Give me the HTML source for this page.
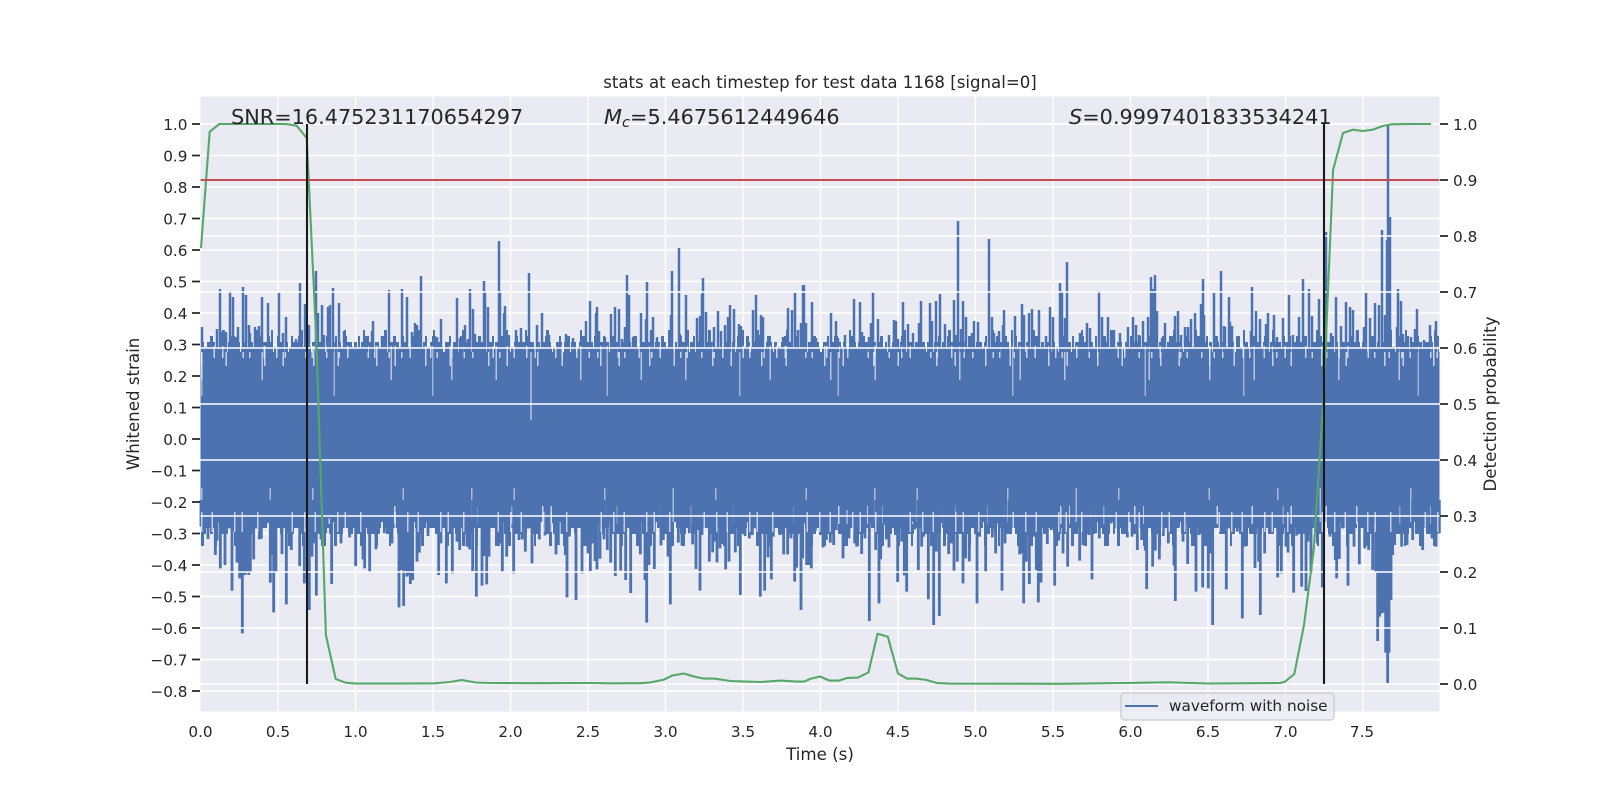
<!DOCTYPE html>
<html><head><meta charset="utf-8"><style>html,body{margin:0;padding:0;background:#fff;width:1600px;height:800px;overflow:hidden}svg{display:block}text{font-family:"DejaVu Sans","Liberation Sans",sans-serif;fill:#262626}</style></head><body>
<svg width="1600" height="800" viewBox="0 0 1600 800" xmlns="http://www.w3.org/2000/svg">
<rect x="200.5" y="96.5" width="1239" height="615" fill="#EAEAF2"/>
<path fill="none" stroke="#fff" stroke-width="1.4" d="M278 96.5V711.5M355.5 96.5V711.5M433 96.5V711.5M510.5 96.5V711.5M588 96.5V711.5M665.5 96.5V711.5M743 96.5V711.5M820.5 96.5V711.5M898 96.5V711.5M975.5 96.5V711.5M1053 96.5V711.5M1130.5 96.5V711.5M1208 96.5V711.5M1285.5 96.5V711.5M1363 96.5V711.5M200.5 124H1439.5M200.5 155.5H1439.5M200.5 187H1439.5M200.5 218.5H1439.5M200.5 250H1439.5M200.5 281.5H1439.5M200.5 313H1439.5M200.5 344.5H1439.5M200.5 376H1439.5M200.5 407.5H1439.5M200.5 439H1439.5M200.5 470.5H1439.5M200.5 502H1439.5M200.5 533.5H1439.5M200.5 565H1439.5M200.5 596.5H1439.5M200.5 628H1439.5M200.5 659.5H1439.5M200.5 691H1439.5"/>

<!-- waveform body -->
<rect x="200.5" y="352" width="1239" height="170" fill="#4C72B0"/>
<g fill="none" stroke="#4C72B0">
<path d="M201 341H1439" stroke-width="22" stroke-dasharray="2 19 3 31 2 13 2 27 3 41 2 17"/>
<path d="M201 344H1439" stroke-width="16" stroke-dasharray="2 7 3 11 2 5 4 13 2 9 3 6"/>
<path d="M201 347H1439" stroke-width="10" stroke-dasharray="3 3 4 2 2 5 6 2 3 4 5 3"/>
<path d="M201 349.5H1439" stroke-width="5" stroke-dasharray="6 1 4 2 8 1 3 2 5 1"/>
<path d="M201 525H1439" stroke-width="6" stroke-dasharray="9 2 5 3 14 1 7 2 11 3"/>
<path d="M201 528H1439" stroke-width="12" stroke-dasharray="5 4 3 7 8 3 2 6 6 5"/>
<path d="M201 534H1439" stroke-width="24" stroke-dasharray="3 11 2 17 5 8 3 23 2 13"/>
</g>
<g fill="none" stroke="#EAEAF2">
<path d="M201 352H1439" stroke-opacity=".8" stroke-width="12" stroke-dasharray="1.5 11 1.5 7 1.5 19 1.5 5 1.5 13"/>
<path d="M201 356H1439" stroke-opacity=".8" stroke-width="20" stroke-dasharray="1.5 23 1.5 37 1.5 17 1.5 29"/>
<path d="M201 363H1439" stroke-opacity=".7" stroke-width="34" stroke-dasharray="1.5 59 1.5 43 1.5 83"/>
<path d="M201 371H1439" stroke-opacity=".55" stroke-width="50" stroke-dasharray="1.5 131 1.5 97 1.5 173"/>
<path d="M531 352V420" stroke-opacity=".7" stroke-width="1.5"/>
<path d="M201 515H1439" stroke-opacity=".8" stroke-width="18" stroke-dasharray="1.5 13 1.5 29 1.5 7 1.5 19"/>
<path d="M201 505H1439" stroke-opacity=".6" stroke-width="34" stroke-dasharray="1.5 67 1.5 41 1.5 89"/>
</g>

<!-- upper spikes -->
<path fill="none" stroke="#4C72B0" stroke-width="2.5" d="M202 352V327M220 352V289M217 352V329M221 352V332M226 352V332M230 352V291M233 352V297M236 352V337M238 352V327M243 352V287M246 352V295M249 352V325M250 352V333M255 352V327M259 352V326M262 352V297M268 352V303M279 352V293M283 352V333M286 352V317M296 352V339M300 352V283M305 352V304M309 352V325M316 352V271M318 352V313M322 352V305M324 352V335M328 352V307M330 352V305M333 352V288M339 352V303M344 352V331M367 352V336M372 352V331M373 352V321M382 352V336M389 352V290M402 352V289M407 352V297M412 352V332M415 352V323M417 352V325M421 352V276M437 352V337M441 352V319M457 352V298M460 352V338M465 352V325M468 352V339M470 352V289M473 352V309M475 352V334M484 352V281M485 352V292M488 352V307M499 352V241
M500 352V291M504 352V313M505 352V306M509 352V335M516 352V330M521 352V328M529 352V273M537 352V325M542 352V313M549 352V335M566 352V334M573 352V338M583 352V336M586 352V321M590 352V301M596 352V313M597 352V307M599 352V331M605 352V337M611 352V314M615 352V307M619 352V309M622 352V339M625 352V327M627 352V275M629 352V295M633 352V337M641 352V313M646 352V319M647 352V282M651 352V330M653 352V317M657 352V337M671 352V315M672 352V271M679 352V248M680 352V334M686 352V295M697 352V318M700 352V316M702 352V294M703 352V278M706 352V312M714 352V327M718 352V311M721 352V331M725 352V325M728 352V317M730 352V305M734 352V309M739 352V324M741 352V326M753 352V310M756 352V295M759 352V335M761 352V315M763 352V317M783 352V337M788 352V308M792 352V310M795 352V293M798 352V330M801 352V323M803 352V285
M804 352V285M806 352V323M812 352V302M816 352V338M831 352V313M836 352V321M838 352V338M845 352V335M854 352V299M860 352V302M862 352V332M869 352V337M871 352V323M873 352V292M878 352V319M889 352V335M894 352V320M896 352V321M898 352V339M903 352V302M908 352V324M913 352V333M919 352V323M921 352V301M930 352V303M932 352V321M936 352V301M940 352V294M945 352V324M954 352V300M956 352V335M958 352V221M961 352V329M963 352V301M966 352V317M972 352V333M974 352V321M978 352V322M989 352V239M992 352V317M994 352V333M999 352V331M1003 352V325M1004 352V310M1015 352V316M1022 352V304M1024 352V315M1029 352V313M1032 352V309M1039 352V310M1046 352V336M1050 352V307M1053 352V317M1060 352V283M1062 352V291M1065 352V318M1067 352V262M1080 352V333M1087 352V323M1090 352V328M1099 352V291M1102 352V317
M1108 352V317M1114 352V330M1120 352V333M1128 352V327M1133 352V317M1136 352V325M1139 352V335M1143 352V321M1148 352V317M1151 352V277M1153 352V289M1155 352V275M1157 352V311M1162 352V338M1165 352V323M1175 352V316M1178 352V311M1181 352V335M1185 352V327M1188 352V327M1191 352V319M1195 352V313M1201 352V304M1203 352V279M1204 352V315M1214 352V293M1221 352V271M1224 352V326M1225 352V327M1229 352V297M1230 352V322M1232 352V326M1251 352V331M1252 352V287M1256 352V311M1260 352V319M1266 352V324M1268 352V313M1274 352V315M1277 352V337M1283 352V318M1289 352V295M1290 352V336M1293 352V335M1299 352V317M1303 352V279M1309 352V289M1312 352V316M1319 352V299M1326 352V232M1331 352V333M1336 352V297M1341 352V326M1346 352V302M1350 352V307M1353 352V310M1357 352V332M1364 352V327M1366 352V293M1370 352V318M1375 352V303M1379 352V305M1382 352V230M1385 352V315M1387 352V240M1388 352V124M1390 352V217M1397 352V327M1398 352V289M1401 352V301M1403 352V334M1411 352V337M1415 352V329M1417 352V309M1424 352V340M1430 352V325M1436 352V321"/>

<!-- lower spikes (crop coordinates, 3x) -->
<g fill="none" stroke="#4C72B0" stroke-width="8.5">
<path transform="translate(197,500) scale(.33333)" d="M12 0V80M20 0V90M33 0V117M45 0V80M55 0V165M60 0V122M70 0V205M84 0V195M96 0V85M105 0V272M112 0V95M120 0V188M128 0V235M134 0V235M136 0V400M144 0V225M150 0V215M155 0V225M160 0V215M170 0V178M178 0V85M187 0V118M193 0V116M200 0V75M210 0V70M220 0V248M226 0V165M230 0V337M237 0V218M247 0V60M255 0V162M268 0V313M275 0V100M283 0V150M292 0V80M298 0V80M308 0V198M322 0V250M337 0V330M345 0V170M352 0V130M358 0V287M365 0V100M372 0V118M386 0V100M395 0V55M404 0V252M415 0V100M424 0V85M432 0V130M445 0V55M458 0V112M470 0V60M476 0V198M487 0V40M498 0V178M503 0V205M518 0V215M527 0V40M537 0V148M548 0V60M562 0V100M570 0V75M585 0V130M606 0V322M612 0V210M620 0V318M626 0V212M630 0V230M636 0V225M640 0V252M647 0V240M660 0V185M667 0V158M682 0V80M693 0V108M702 0V55M725 0V225M732 0V130M748 0V250M766 0V220M780 0V125M788 0V150M800 0V115M810 0V140M818 0V148M827 0V213M838 0V290M855 0V257M862 0V168M869 0V253M876 0V170M886 0V70M903 0V135M908 0V130"/>
<path transform="translate(500,500) scale(.33333)" d="M7 0V214M20 0V170M30 0V70M41 0V220M57 0V120M67 0V118M76 0V155M85 0V85M96 0V190M108 0V102M118 0V118M135 0V106M145 0V60M160 0V70M168 0V163M175 0V135M186 0V102M196 0V165M201 0V292M208 0V110M216 0V82M228 0V300M246 0V220M253 0V70M258 0V90M264 0V160M271 0V213M279 0V130M285 0V183M291 0V208M300 0V176M312 0V118M322 0V150M332 0V188M346 0V228M356 0V85M362 0V212M377 0V240M386 0V80M392 0V279M402 0V60M412 0V90M421 0V163M435 0V240M440 0V368M447 0V195M463 0V207M470 0V45M483 0V136M490 0V120M504 0V170M511 0V313M535 0V128M546 0V137M558 0V70M568 0V100M578 0V133M588 0V207M593 0V90M600 0V272M606 0V105M615 0V55M628 0V185M638 0V157M644 0V125M651 0V187M660 0V145M668 0V132M677 0V208M687 0V185M697 0V90M706 0V157M715 0V70M721 0V285M735 0V108M748 0V115M757 0V105M768 0V85M781 0V290M794 0V272M804 0V172M814 0V238M820 0V110M830 0V60M840 0V105M851 0V163M863 0V163M873 0V115M884 0V245M890 0V203M903 0V330M908 0V175"/>
<path transform="translate(803,500) scale(.33333)" d="M2 0V70M11 0V195M18 0V195M25 0V205M37 0V92M52 0V105M60 0V142M70 0V120M82 0V128M92 0V135M100 0V90M120 0V175M130 0V30M138 0V115M155 0V130M161 0V140M176 0V162M186 0V115M199 0V363M208 0V75M218 0V150M228 0V310M233 0V178M243 0V75M250 0V118M258 0V142M270 0V60M277 0V105M284 0V246M296 0V125M304 0V226M311 0V275M328 0V65M335 0V88M346 0V210M356 0V140M362 0V110M376 0V298M384 0V72M392 0V375M400 0V155M409 0V348M414 0V70M437 0V162M445 0V130M453 0V212M463 0V185M471 0V100M480 0V250M488 0V175M499 0V184M511 0V70M522 0V310M530 0V110M548 0V215M568 0V112M578 0V160M586 0V70M597 0V272M606 0V130M618 0V85M637 0V80M650 0V163M656 0V160M662 0V310M670 0V185M679 0V252M686 0V100M692 0V110M700 0V210M706 0V307M714 0V248M725 0V60M733 0V132M745 0V90M755 0V257M767 0V122M780 0V160M794 0V200M808 0V120M830 0V182M840 0V135M846 0V138M858 0V105M867 0V238M878 0V100M889 0V115M908 0V100"/>
<path transform="translate(1106,500) scale(.33333)" d="M2 0V100M15 0V70M30 0V85M38 0V90M50 0V95M64 0V112M78 0V110M94 0V150M107 0V120M118 0V152M122 0V267M140 0V200M148 0V152M160 0V178M172 0V108M187 0V130M204 0V197M208 0V303M218 0V83M231 0V125M245 0V192M250 0V60M270 0V275M279 0V105M290 0V262M300 0V125M307 0V265M314 0V160M320 0V375M345 0V82M361 0V268M370 0V85M380 0V70M394 0V95M409 0V355M417 0V140M447 0V204M458 0V185M463 0V345M476 0V160M493 0V82M515 0V232M526 0V220M540 0V140M546 0V158M563 0V278M572 0V107M587 0V260M600 0V273M606 0V125M615 0V215M634 0V130M649 0V262M672 0V110M688 0V180M692 0V235M700 0V177M710 0V85M726 0V257M733 0V70M744 0V140M760 0V193M776 0V145M788 0V150M800 0V210M809 0V215M815 0V423M821 0V350M827 0V340M833 0V338M839 0V458M845 0V549M849 0V458M855 0V300M860 0V165M866 0V135M887 0V140M903 0V135M920 0V120M935 0V80M950 0V150M965 0V90M978 0V115M990 0V140M1000 0V100"/>
</g>
<path d="M201 522H1439" fill="none" stroke="#EAEAF2" stroke-opacity=".75" stroke-width="20" stroke-dasharray="1.5 9 1.5 21 1.5 6 1.5 14 1.5 33 1.5 11"/>

<!-- right axis grid -->
<path fill="none" stroke="#fff" stroke-width="1.4" d="M200.5 124H1439.5M200.5 180H1439.5M200.5 236H1439.5M200.5 292H1439.5M200.5 348H1439.5M200.5 404H1439.5M200.5 460H1439.5M200.5 516H1439.5M200.5 572H1439.5M200.5 628H1439.5M200.5 684H1439.5"/>

<!-- green probability -->
<path fill="none" stroke="#55A868" stroke-width="2.1" stroke-linejoin="round" d="M201 248L209.7 131.7 219.4 124 286 124 296.7 125.7 306.7 138 316.3 340 325.9 635 335.7 679 345.7 682.7 355 683.5 400 683.5 435 683.3 450 682 461.7 680 476 682.5 490 683 530 683.2 590 683 610 683.3 640 683.2 650 682.5 664 679.6 672.4 675.5 683.7 673.5 693.9 676.5 704 678.6 714 678.6 730.6 681 745 681.6 761 682 780.6 680.6 796 681.6 804 681.6 811 678.6 820 676.5 829.6 680.6 838.8 680.6 847 678 858 677.6 868.4 672.4 877.6 633.7 887.8 636.7 898 673.5 907 678.6 916 678.6 926.5 680 936.7 683 949 683.6 1061 683.8 1122 683 1168 682.3 1209 683.5 1280 683 1285 681.7 1294.3 674 1304 625 1313.7 550 1323.4 400 1333.1 170 1343 133 1352.7 129.7 1362.7 131 1372.7 129.7 1382.7 126 1391.7 124.3 1410 124 1431 124"/>

<path d="M200.5 180H1439.5" stroke="#C44E52" stroke-width="2.1"/>
<path d="M307 124V684M1324 124V684" stroke="#1a1a1a" stroke-width="2.1"/>

<!-- ticks -->
<path fill="none" stroke="#262626" stroke-width="1.7" d="M192 124H200M192 155.5H200M192 187H200M192 218.5H200M192 250H200M192 281.5H200M192 313H200M192 344.5H200M192 376H200M192 407.5H200M192 439H200M192 470.5H200M192 502H200M192 533.5H200M192 565H200M192 596.5H200M192 628H200M192 659.5H200M192 691H200M1440 124H1448M1440 180H1448M1440 236H1448M1440 292H1448M1440 348H1448M1440 404H1448M1440 460H1448M1440 516H1448M1440 572H1448M1440 628H1448M1440 684H1448"/>

<g font-size="15.28" text-anchor="end">
<text x="187.5" y="130">1.0</text><text x="187.5" y="161.5">0.9</text><text x="187.5" y="193">0.8</text><text x="187.5" y="224.5">0.7</text><text x="187.5" y="256">0.6</text><text x="187.5" y="287.5">0.5</text><text x="187.5" y="319">0.4</text><text x="187.5" y="350.5">0.3</text><text x="187.5" y="382">0.2</text><text x="187.5" y="413.5">0.1</text><text x="187.5" y="445">0.0</text><text x="187.5" y="476.5">−0.1</text><text x="187.5" y="508">−0.2</text><text x="187.5" y="539.5">−0.3</text><text x="187.5" y="571">−0.4</text><text x="187.5" y="602.5">−0.5</text><text x="187.5" y="634">−0.6</text><text x="187.5" y="665.5">−0.7</text><text x="187.5" y="697">−0.8</text>
</g>
<g font-size="15.28">
<text x="1453" y="130">1.0</text><text x="1453" y="186">0.9</text><text x="1453" y="242">0.8</text><text x="1453" y="298">0.7</text><text x="1453" y="354">0.6</text><text x="1453" y="410">0.5</text><text x="1453" y="466">0.4</text><text x="1453" y="522">0.3</text><text x="1453" y="578">0.2</text><text x="1453" y="634">0.1</text><text x="1453" y="690">0.0</text>
</g>
<g font-size="15.28" text-anchor="middle">
<text x="200.5" y="737">0.0</text><text x="278" y="737">0.5</text><text x="355.5" y="737">1.0</text><text x="433" y="737">1.5</text><text x="510.5" y="737">2.0</text><text x="588" y="737">2.5</text><text x="665.5" y="737">3.0</text><text x="743" y="737">3.5</text><text x="820.5" y="737">4.0</text><text x="898" y="737">4.5</text><text x="975.5" y="737">5.0</text><text x="1053" y="737">5.5</text><text x="1130.5" y="737">6.0</text><text x="1208" y="737">6.5</text><text x="1285.5" y="737">7.0</text><text x="1362" y="737">7.5</text>
</g>

<text x="820" y="88" font-size="16.6" text-anchor="middle">stats at each timestep for test data 1168 [signal=0]</text>
<text x="820" y="760" font-size="16.67" text-anchor="middle">Time (s)</text>
<text transform="translate(139,404) rotate(-90)" font-size="16.67" text-anchor="middle">Whitened strain</text>
<text transform="translate(1496,404) rotate(-90)" font-size="16.67" text-anchor="middle">Detection probability</text>

<text x="231" y="124" font-size="20.8">SNR=16.475231170654297</text>
<text x="604" y="124" font-size="20.83"><tspan font-style="italic">M</tspan><tspan font-style="italic" font-size="14.6" dy="3.1">c</tspan><tspan dy="-3.1">=5.4675612449646</tspan></text>
<text x="1069" y="124" font-size="20.83"><tspan font-style="italic">S</tspan>=0.9997401833534241</text>

<!-- legend -->
<rect x="1121" y="693" width="213" height="27" rx="3.5" fill="#EAEAF2" fill-opacity=".8" stroke="#cccccc" stroke-width="1.3"/>
<path d="M1125 706H1158" stroke="#4C72B0" stroke-width="2.1"/>
<text x="1169" y="711" font-size="15.28">waveform with noise</text>
</svg>
</body></html>
